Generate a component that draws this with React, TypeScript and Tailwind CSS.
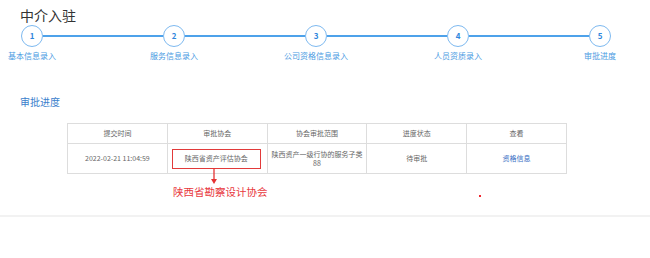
import React from 'react';

const steps = ['基本信息录入', '服务信息录入', '公司资格信息录入', '人员资质录入', '审批进度'];

const font = { fontFamily: '"Noto Sans CJK SC", "Noto Sans", sans-serif' };

export default function App() {
  return (
    <div className="w-[650px] h-[258px] bg-white overflow-hidden" style={font}>
      <h1 className="pl-[20px] pt-[5px] text-[14px] leading-[20px] text-[#333] font-normal">中介入驻</h1>

      {/* steps */}
      <div className="grid grid-cols-[repeat(5,142px)] ml-[-39px]">
        {steps.map((s, i) => (
          <div key={s} className="flex flex-col items-center">
            <div className="flex items-center w-full">
              <div className={`flex-1 h-[2px] ${i === 0 ? 'bg-transparent' : 'bg-[#4ea2ea]'}`} />
              <div className="w-[22px] h-[22px] rounded-full border-[1.5px] border-[#7db9f0] bg-white flex items-center justify-center text-[8px] font-bold text-[#2f86dc]">
                {i + 1}
              </div>
              <div className={`flex-1 h-[2px] ${i === steps.length - 1 ? 'bg-transparent' : 'bg-[#4ea2ea]'}`} />
            </div>
            <span className="mt-[3px] text-[8px] leading-[11px] text-[#4a9ae2] whitespace-nowrap">{s}</span>
          </div>
        ))}
      </div>

      <h3 className="mt-[34px] pl-[20px] text-[10px] leading-[14px] text-[#3a80cc]">审批进度</h3>

      <table className="mt-[14px] ml-[67px] w-[500px] table-fixed border-collapse text-[7px] text-[#666] text-center">
        <thead>
          <tr className="h-[20px]">
            <th className="border border-[#ddd] font-normal">提交时间</th>
            <th className="border border-[#ddd] font-normal">审批协会</th>
            <th className="border border-[#ddd] font-normal">协会审批范围</th>
            <th className="border border-[#ddd] font-normal">进度状态</th>
            <th className="border border-[#ddd] font-normal">查看</th>
          </tr>
        </thead>
        <tbody>
          <tr className="h-[30px]">
            <td className="border border-[#ddd]">2022-02-21 11:04:59</td>
            <td className="border border-[#ddd]">
              <div className="relative ml-[4px] w-[89px] h-[20px] border-[1.5px] border-[#e23a3a] flex items-center justify-center">
                陕西省资产评估协会
                <svg className="absolute left-[38px] top-full" width="6" height="17" viewBox="0 0 6 17">
                  <line x1="3" y1="0" x2="3" y2="12" stroke="#e53333" strokeWidth="1.3" />
                  <path d="M0 11 L6 11 L3 16 Z" fill="#e53333" />
                </svg>
              </div>
            </td>
            <td className="border border-[#ddd] px-[2px] leading-[9px] whitespace-nowrap">陕西资产一级行协的服务子类<br />88</td>
            <td className="border border-[#ddd]">待审批</td>
            <td className="border border-[#ddd] text-[#3a6fc4]">资格信息</td>
          </tr>
        </tbody>
      </table>

      <div className="flex items-center mt-[11px] h-[14px]">
        <span className="ml-[173px] text-[10.5px] leading-[14px] text-[#e8383d] whitespace-nowrap">陕西省勘察设计协会</span>
        <span className="ml-auto mr-[169px] w-[2px] h-[2px] bg-[#f0262e] mt-[8px]" />
      </div>

      <div className="mt-[16px] h-[2px] bg-[#f2f2f2]" />
    </div>
  );
}
